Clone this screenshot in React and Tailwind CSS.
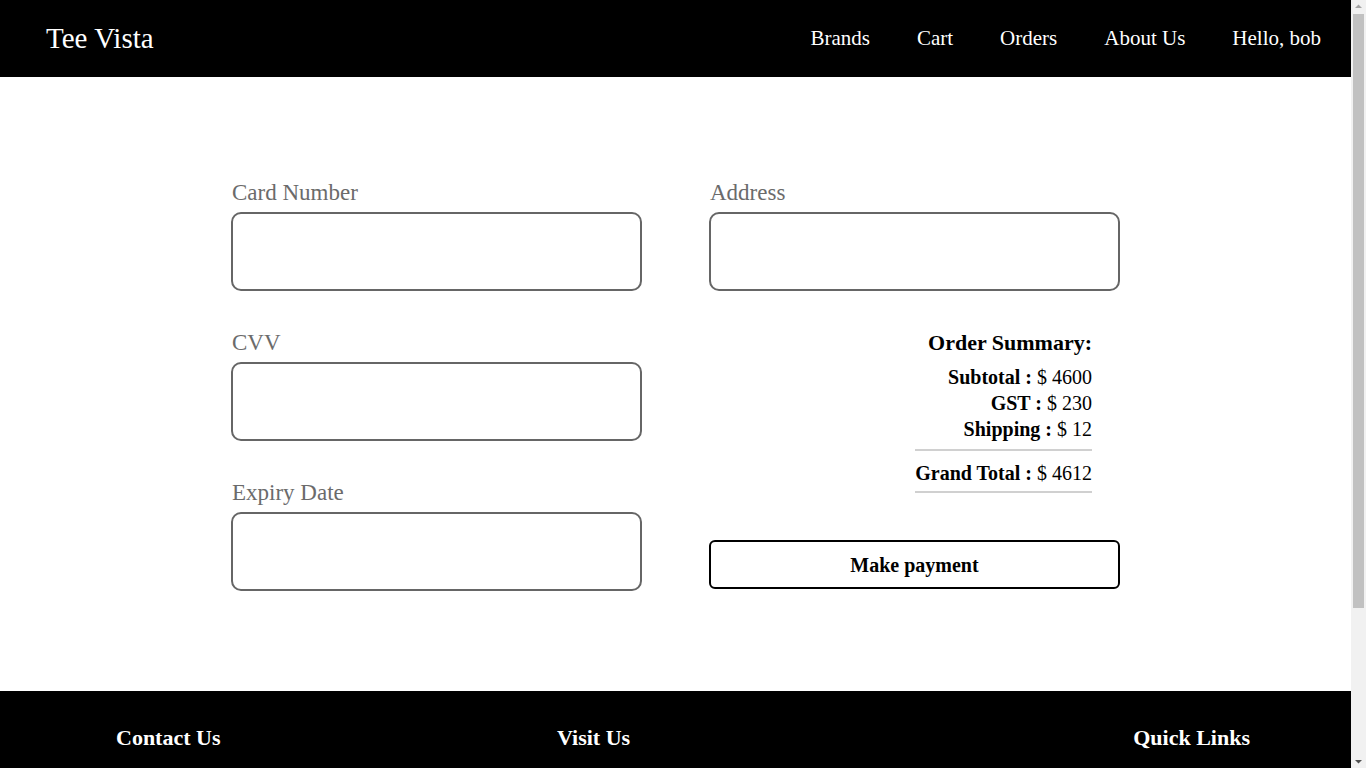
const serif = { fontFamily: '"Liberation Serif", "DejaVu Serif", serif' };

const Field = ({ label }) => (
  <div className="flex flex-col">
    <label className="text-[23px] leading-[30px] text-[#6b6b6b] pl-[1px] mb-[4px]">
      {label}
    </label>
    <input
      type="text"
      className="h-[79px] w-full rounded-[10px] border-2 border-[#666666] bg-white outline-none"
    />
  </div>
);

const SummaryLine = ({ label, value }) => (
  <div className="text-[20px] leading-[26px]">
    <span className="font-bold">{label} :</span> $ {value}
  </div>
);

// classic browser scrollbar seen at the right edge of the screenshot
const Scrollbar = () => (
  <div className="fixed top-0 right-0 w-[15px] h-screen bg-[#f1f1f1] flex flex-col items-center">
    <svg width="15" height="14" viewBox="0 0 15 14" className="shrink-0">
      <path d="M4 8 L7.5 4.5 L11 8 Z" fill="#a3a3a3" />
    </svg>
    <div className="w-[11px] h-[594px] bg-[#c1c1c1]" />
    <div className="flex-1" />
    <svg width="15" height="14" viewBox="0 0 15 14" className="shrink-0">
      <path d="M4 6 L7.5 9.5 L11 6 Z" fill="#505050" />
    </svg>
  </div>
);

export default function App() {
  const links = ["Brands", "Cart", "Orders", "About Us", "Hello, bob"];

  return (
    <div style={serif} className="min-h-screen bg-white text-black mr-[15px]">
      {/* Navbar */}
      <nav className="h-[77px] bg-black flex items-center justify-between pl-[46px] pr-[30px]">
        <span className="text-white text-[29px]">Tee Vista</span>
        <ul className="flex items-center gap-[47px]">
          {links.map((l) => (
            <li key={l} className="text-white text-[21px] cursor-pointer">
              {l}
            </li>
          ))}
        </ul>
      </nav>

      {/* Checkout form */}
      <main className="h-[614px] flex justify-center pt-[101px]">
        <div className="grid grid-cols-2 gap-x-[67px] w-[889px] items-start">
          <div className="flex flex-col gap-[37px]">
            <Field label="Card Number" />
            <Field label="CVV" />
            <Field label="Expiry Date" />
          </div>

          <div className="flex flex-col">
            <Field label="Address" />

            <div className="flex justify-end pr-[28px] mt-[37px]">
              <div className="text-right">
                <h3 className="text-[22px] leading-[30px] font-bold mb-[6px]">
                  Order Summary:
                </h3>
                <SummaryLine label="Subtotal" value="4600" />
                <SummaryLine label="GST" value="230" />
                <SummaryLine label="Shipping" value="12" />
                <div className="h-[2px] bg-[#d0d0d0] mt-[7px] mb-[9px]" />
                <SummaryLine label="Grand Total" value="4612" />
                <div className="h-[2px] bg-[#d0d0d0] mt-[5px]" />
              </div>
            </div>

            <button className="mt-[47px] h-[49px] w-full rounded-[6px] border-2 border-black bg-white text-[20px] font-bold">
              Make payment
            </button>
          </div>
        </div>
      </main>

      {/* Footer */}
      <footer className="bg-black text-white h-[262px] pt-[32px] flex pl-[116px] pr-[101px]">
        <div className="w-[441px]">
          <h4 className="text-[22px] leading-[30px] font-bold">Contact Us</h4>
        </div>
        <div className="flex-1">
          <h4 className="text-[22px] leading-[30px] font-bold">Visit Us</h4>
        </div>
        <div>
          <h4 className="text-[22px] leading-[30px] font-bold">Quick Links</h4>
        </div>
      </footer>

      <Scrollbar />
    </div>
  );
}
